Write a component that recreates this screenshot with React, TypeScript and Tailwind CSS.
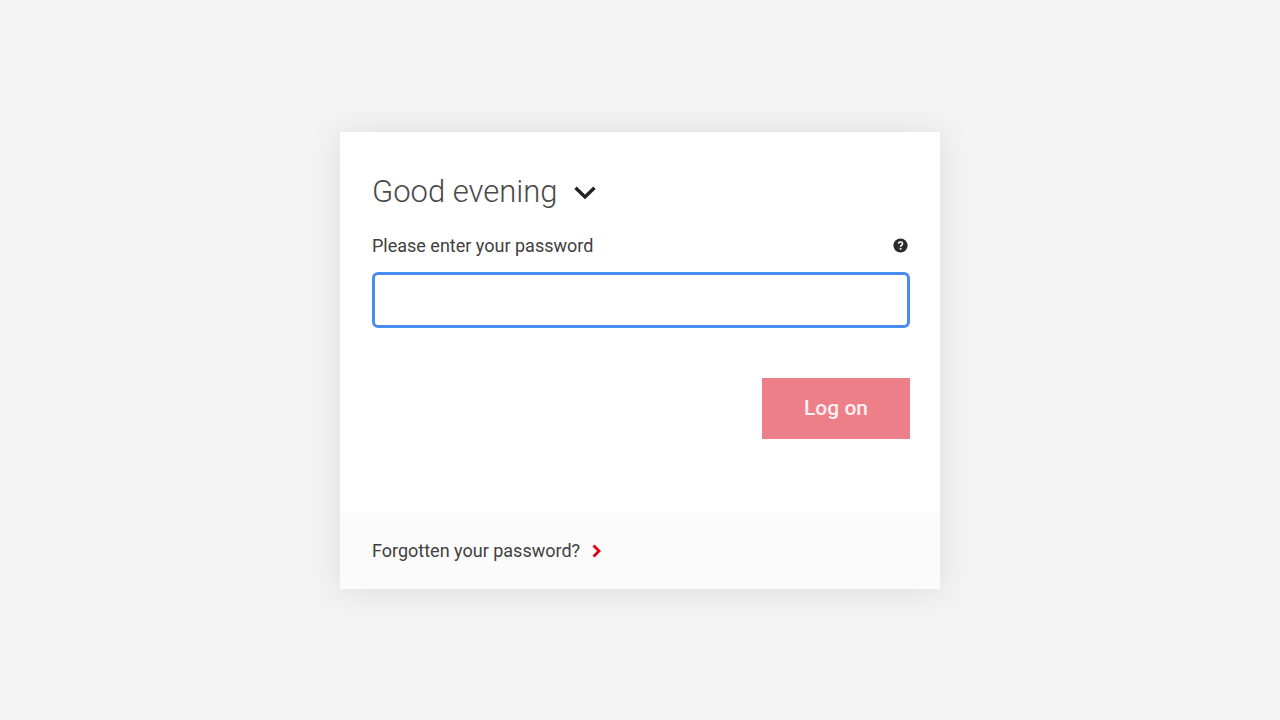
export default function App() {
  return (
    <main className="flex min-h-screen items-center justify-center bg-[#f3f3f3] font-['Roboto','Liberation_Sans',sans-serif] text-[#404040]">
      <section className="w-full max-w-[600px] bg-white shadow-[0_2px_32px_rgba(0,0,0,0.09)]">
        <form className="px-8 pt-9 pb-[74px]" onSubmit={(e) => e.preventDefault()}>
          <h1 className="text-[31px] leading-[48px] font-light text-[#4a4a4a]">
            <button type="button" className="flex items-center gap-4">
              Good evening
              <svg className="mt-0.5 h-[14px] w-[22px]" viewBox="0 0 22 14" fill="none" stroke="#222222" strokeWidth="3.4" aria-hidden="true">
                <path d="M1.5 1.8 11 11 20.5 1.8" />
              </svg>
            </button>
          </h1>
          <div className="mt-4 flex items-center justify-between">
            <label htmlFor="password" className="text-lg leading-7">
              Please enter your password
            </label>
            <button type="button" aria-label="Password help">
              <svg className="h-[15px] w-[15px]" viewBox="0 0 15 15" aria-hidden="true">
                <circle cx="7.5" cy="7.5" r="7.1" fill="#2b2b2b" />
                <path d="M5.4 5.6C5.6 3.4 9.7 3.5 9.5 5.8 9.4 7.1 7.7 7.2 7.6 8.8" fill="none" stroke="#ffffff" strokeWidth="1.6" />
                <rect x="6.7" y="9.9" width="1.7" height="1.7" fill="#ffffff" />
              </svg>
            </button>
          </div>
          <input
            id="password"
            type="password"
            className="mt-3 block h-14 w-[calc(100%+2px)] rounded-md border-3 border-[#4a8bf0] bg-white px-4 text-lg outline-none"
          />
          <div className="mt-[50px] -mr-0.5 flex justify-end">
            <button type="submit" className="h-[61px] w-[148px] bg-[#ed7f88] pt-0.5 text-[21px] font-medium text-[#fdf0f1]">
              Log on
            </button>
          </div>
        </form>
        <footer className="bg-[#fbfbfb] px-8 py-6">
          <a href="#forgotten" className="flex items-center gap-3 text-lg leading-7">
            Forgotten your password?
            <svg className="h-[14px] w-[9px]" viewBox="0 0 9 14" fill="none" stroke="#db0011" strokeWidth="2.8" aria-hidden="true">
              <path d="M1.5 1.5 7 7 1.5 12.5" />
            </svg>
          </a>
        </footer>
      </section>
    </main>
  );
}
